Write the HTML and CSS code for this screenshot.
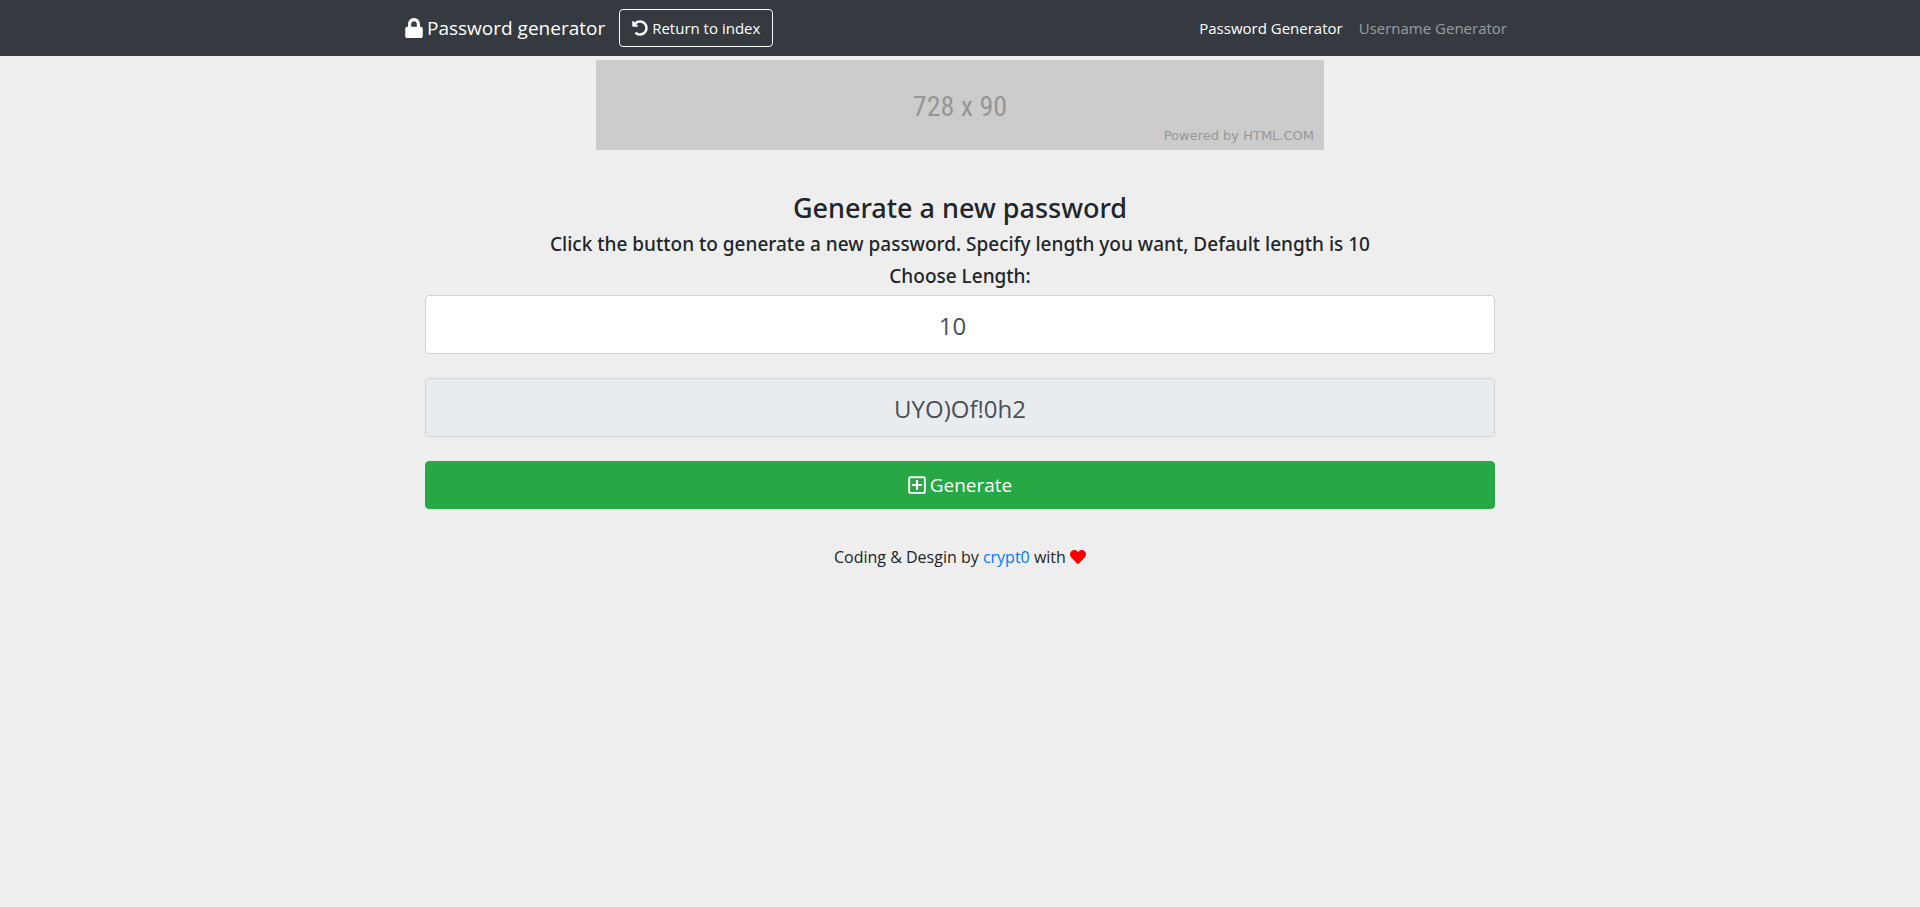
FILE: index.html
```
<!DOCTYPE html>
<html lang="en">
<head>
    <meta charset="UTF-8">
    <meta name="viewport" content="width=device-width, initial-scale=1.0">
    <title>Password generator</title>
    <link rel="stylesheet" href="styles.css">
</head>
<body>
    <nav class="navbar">
        <div class="container">
            <a class="navbar-brand" href="#">
                <svg class="icon-lock" viewBox="0 0 448 512" aria-hidden="true"><path d="M400 224h-24v-72C376 68.200 307.800 0 224 0S72 68.200 72 152v72H48c-26.500 0-48 21.500-48 48v192c0 26.500 21.500 48 48 48h352c26.500 0 48-21.500 48-48V272c0-26.500-21.500-48-48-48zm-104 0H152v-72c0-39.700 32.300-72 72-72s72 32.300 72 72v72z"/></svg>
                Password generator
            </a>
            <button class="btn btn-outline" type="button">
                <svg class="icon-undo" viewBox="0 0 512 512" aria-hidden="true"><path d="M255.500 8c-66.300.100-126.400 26.200-170.900 68.700L48.900 41C33.900 25.900 8 36.600 8 57.900V192c0 13.300 10.700 24 24 24h134.100c21.400 0 32.100-25.900 17-41l-41.800-41.800c30.900-28.900 70.800-44.900 113.200-45.300 92.400-.8 170.300 74 169.500 169.400C423.200 348 348.800 424 256 424c-41.100 0-80-14.700-110.600-41.600-4.700-4.200-11.900-3.900-16.400.6l-39.700 39.700c-4.900 4.900-4.600 12.800.5 17.400C133.800 479.800 192.100 504 256 504c137 0 248-111 248-248C504 119.200 392.400 7.800 255.500 8z"/></svg>
                Return to index
            </button>
            <ul class="navbar-nav">
                <li><a class="nav-link active" href="#">Password Generator</a></li>
                <li><a class="nav-link" href="#">Username Generator</a></li>
            </ul>
        </div>
    </nav>

    <div class="banner">
        <span class="banner-size">728 x 90</span>
        <span class="banner-credit">Powered by HTML.COM</span>
    </div>

    <main class="container">
        <form class="generator">
            <h3>Generate a new password</h3>
            <h5>Click the button to generate a new password. Specify length you want, Default length is 10</h5>
            <label for="length">Choose Length:</label>
            <input type="number" id="length" value="10">
            <input type="text" id="password" value="UYO)Of!0h2" aria-label="Generated password" readonly>
            <button class="btn btn-success" type="button">
                <svg class="icon-plus" viewBox="0 0 448 512" aria-hidden="true"><path d="M352 240v32c0 6.600-5.400 12-12 12h-88v88c0 6.600-5.400 12-12 12h-32c-6.600 0-12-5.400-12-12v-88h-88c-6.600 0-12-5.400-12-12v-32c0-6.600 5.400-12 12-12h88v-88c0-6.600 5.400-12 12-12h32c6.600 0 12 5.400 12 12v88h88c6.600 0 12 5.400 12 12zm96-160v352c0 26.500-21.500 48-48 48H48c-26.500 0-48-21.500-48-48V80c0-26.500 21.500-48 48-48h352c26.500 0 48 21.500 48 48zm-48 346V86c0-3.300-2.700-6-6-6H54c-3.300 0-6 2.700-6 6v340c0 3.300 2.700 6 6 6h340c3.300 0 6-2.700 6-6z"/></svg>
                Generate
            </button>
        </form>
    </main>

    <footer>
        Coding &amp; Desgin by <a href="#">crypt0</a> with
        <svg class="icon-heart" viewBox="0 0 512 512" aria-hidden="true"><path d="M462.300 62.600C407.500 15.900 326 24.300 275.700 76.200L256 96.500l-19.700-20.300C186.100 24.300 104.500 15.900 49.700 62.600c-62.800 53.600-66.100 149.800-9.900 207.900l193.500 199.800c12.500 12.900 32.800 12.900 45.300 0l193.500-199.800c56.300-58.100 53-154.300-9.800-207.900z"/></svg>
    </footer>
</body>
</html>
```

FILE: styles.css
```
* {
    box-sizing: border-box;
}
body {
    margin: 0;
    font-family: "Segoe UI", "Open Sans", "Noto Sans", sans-serif;
    font-size: 15px;
    line-height: 24px;
    color: #212529;
    background-color: #eee;
}
a {
    color: #007bff;
    text-decoration: none;
}
svg {
    fill: currentColor;
}
.container {
    width: 100%;
    max-width: 1140px;
    margin: 0 auto;
    padding: 0 15px;
}
.navbar {
    background-color: #343a40;
    padding: 8px 16px;
}
.navbar .container {
    display: flex;
    align-items: center;
    min-height: 40px;
}
.navbar-brand {
    display: flex;
    align-items: center;
    gap: 4px;
    margin-right: 14px;
    font-size: 19px;
    color: #fff;
}
.navbar-nav {
    display: flex;
    list-style: none;
    margin: 0 0 0 auto;
    padding: 0;
}
.nav-link {
    display: block;
    padding: 8px;
    color: rgba(255, 255, 255, 0.5);
}
.nav-link.active {
    color: #fff;
}
.btn {
    display: flex;
    align-items: center;
    justify-content: center;
    gap: 4px;
    font-family: inherit;
    cursor: pointer;
    border: 1px solid transparent;
    border-radius: 4px;
    color: #fff;
}
.btn-outline {
    padding: 6px 12px;
    font-size: 15px;
    line-height: 24px;
    background: transparent;
    border-color: #f8f9fa;
}
.btn-success {
    width: 100%;
    height: 48px;
    font-size: 19px;
    background: #28a745;
    border-color: #28a745;
}
.icon-lock, .icon-plus {
    width: 18px;
    height: 20px;
}
.icon-undo, .icon-heart {
    width: 16px;
    height: 16px;
}
.icon-heart {
    color: red;
    vertical-align: -2px;
}
.banner {
    position: relative;
    display: flex;
    align-items: center;
    justify-content: center;
    width: 100%;
    max-width: 728px;
    height: 90px;
    margin: 4px auto 40px;
    background: #ccc;
    color: #969696;
}
.banner-size {
    padding-top: 4px;
    font-family: "Arial Narrow", "Roboto Condensed", "Liberation Sans", sans-serif;
    font-size: 28px;
}
.banner-credit {
    position: absolute;
    right: 10px;
    bottom: 2px;
    font-family: "DejaVu Sans", sans-serif;
    font-size: 13px;
}
.generator {
    padding: 0 20px;
    text-align: center;
}
h3, h5, label {
    display: block;
    margin: 0 0 8px;
    font-family: "Segoe UI", "Noto Sans", sans-serif;
    font-weight: 500;
}
h3 {
    margin-bottom: 6px;
    font-size: 27px;
    line-height: 36px;
}
h5, label {
    font-size: 19px;
    line-height: 24px;
}
label {
    margin-bottom: 7px;
}
input {
    display: block;
    width: 100%;
    height: 59px;
    margin-bottom: 24px;
    padding: 10px 16px 8px;
    font-family: inherit;
    font-size: 24px;
    text-align: center;
    color: #495057;
    background: #fff;
    border: 1px solid #ced4da;
    border-radius: 4px;
}
input[readonly] {
    background: #e9ecef;
}
footer {
    margin-top: 36px;
    font-size: 16px;
    text-align: center;
}
```
